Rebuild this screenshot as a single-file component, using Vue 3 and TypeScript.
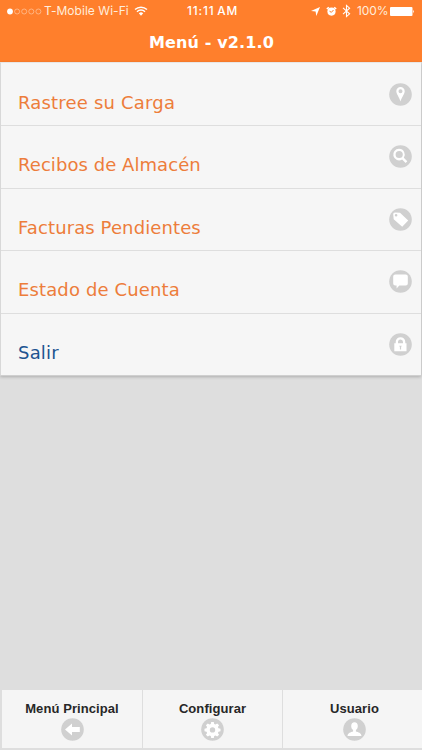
<script setup lang="ts">
type IconName = 'pin' | 'search' | 'tag' | 'comment' | 'lock' | 'back' | 'gear' | 'user'
interface Item { label: string; icon: IconName; exit?: boolean; spacing: number }
interface Tab { label: string; icon: IconName }

const items: Item[] = [
  { label: 'Rastree su Carga', icon: 'pin', spacing: 0.19 },
  { label: 'Recibos de Almacén', icon: 'search', spacing: 0.06 },
  { label: 'Facturas Pendientes', icon: 'tag', spacing: 0.11 },
  { label: 'Estado de Cuenta', icon: 'comment', spacing: 0.13 },
  { label: 'Salir', icon: 'lock', exit: true, spacing: 0.2 },
]
const tabs: Tab[] = [
  { label: 'Menú Principal', icon: 'back' },
  { label: 'Configurar', icon: 'gear' },
  { label: 'Usuario', icon: 'user' },
]
const paths: Record<IconName, string> = {
  pin: 'M11.500 4a4.200 4.200 0 0 0-4.200 4.200c0 2.600 2.800 5.600 4.200 10.300 1.400-4.700 4.200-7.700 4.200-10.300A4.200 4.200 0 0 0 11.500 4zm0 2.200a2 2 0 1 1 0 4 2 2 0 0 1 0-4z',
  search: 'M10.200 3.800a5.800 5.800 0 1 0 2.900 10.700l3.500 3.500 1.700-1.700-3.500-3.500A5.800 5.800 0 0 0 10.200 3.800zm0 2.100a3.600 3.600 0 1 1 0 7.200 3.600 3.600 0 0 1 0-7.200z',
  tag: 'M4.200 6.300l.4-1.400 1.400-.5 5 .3 8.200 7.700-6 6.400-8.500-7.600zm2.900-.4a1.300 1.300 0 1 0 0 2.600 1.300 1.300 0 0 0 0-2.600z',
  comment: 'M6.200 4.600h10.600a2 2 0 0 1 2 2v7a2 2 0 0 1-2 2h-6.500l-2.700 3v-3H6.200a2 2 0 0 1-2-2v-7a2 2 0 0 1 2-2z',
  lock: 'M5.300 10.300h1.400V9a4.800 4.800 0 0 1 9.600 0v1.300h1.200v8H5.300zM9 10.300h5V9a2.500 2.500 0 0 0-5 0zm1.200 2.400 .7 1.200v2.500h1.200V13.900l.7-1.200z',
  back: 'M4 11.500l7-6v3.600h7.800v4.800H11v3.600z',
  gear: 'M10.200 4h2.600l.4 2 1.300.6 1.700-1.200 1.900 1.900-1.200 1.700.6 1.300 2 .4v2.600l-2 .4-.6 1.300 1.200 1.700-1.900 1.900-1.700-1.200-1.300.6-.4 2h-2.600l-.4-2-1.300-.6-1.700 1.200-1.900-1.900 1.200-1.700-.6-1.300-2-.4v-2.600l2-.4.6-1.300-1.200-1.700 1.900-1.900 1.700 1.200 1.300-.6zM11.500 9.200a2.700 2.700 0 1 0 0 5.400 2.700 2.700 0 0 0 0-5.400z',
  user: 'M11.500 4.300c-2.100 0-3.300 1.500-3.300 3.700 0 1.800.7 3.300 1.900 4.100v1.300c-2.300.7-5.400 1.400-5.600 4.500h14c-.2-3.100-3.300-3.800-5.600-4.500v-1.300c1.200-.8 1.900-2.300 1.900-4.100 0-2.200-1.200-3.700-3.300-3.700z',
}
</script>

<template>
  <main class="screen">
    <header class="top">
      <div class="status">
        <div class="carrier">
          <svg class="dots" width="35" height="7" viewBox="0 0 35 7"><circle cx="3" cy="3.500" r="2.900" fill="#fff" /><circle v-for="n in 4" :key="n" :cx="3 + n * 7.1" cy="3.500" r="2.500" fill="none" stroke="#ffc9a2" stroke-width=".7" /></svg>
          <span class="network">T-Mobile Wi-Fi</span>
          <svg class="wifi" width="14" height="10" viewBox="0 0 14 10"><path d="M1 3.500a8.800 8.800 0 0 1 12 0M3 5.700a5.700 5.700 0 0 1 8 0" fill="none" stroke="#fff" stroke-width="1.500" /><path d="M4.800 7.300a3.300 3.300 0 0 1 4.400 0L7 9.700z" fill="#fff" /></svg>
        </div>
        <span class="time">11:11 AM</span>
        <div class="indicators">
          <svg width="9" height="9" viewBox="0 0 9 9"><path d="M9 0 5.300 9 4.600 4.600 0 4z" fill="#fff" /></svg>
          <svg class="alarm" width="11" height="11" viewBox="0 0 11 11"><circle cx="5.500" cy="5.600" r="4.100" fill="#fff" /><path d="M.8 3 2.800 1.200M10.200 3 8.200 1.200" stroke="#fff" stroke-width="1.500" /><path d="M3.500 5.200 5.400 6.300 7.500 4" fill="none" stroke="#ff7f2c" /></svg>
          <svg class="bluetooth" width="9" height="14" viewBox="0 0 9 14"><path d="M1 3.900 7.600 9.800 4.500 12.600V1.400l3.100 2.800L1 10.100" fill="none" stroke="#fff" stroke-width="1.100" /></svg>
          <span class="percent">100%</span>
          <svg class="battery" width="25" height="9" viewBox="0 0 25 9"><rect width="22.500" height="9" rx="1" fill="#fff" /><path d="M23.200 2.800q1.800 1.700 0 3.400z" fill="#fff" /></svg>
        </div>
      </div>
      <h1>Menú - v2.1.0</h1>
    </header>
    <nav class="menu">
      <a v-for="item in items" :key="item.label" class="row" :class="{ exit: item.exit }">
        <span class="label" :style="{ letterSpacing: item.spacing + 'px' }">{{ item.label }}</span>
        <svg class="icon" viewBox="0 0 23 23"><circle cx="11.500" cy="11.500" r="11.300" fill="#d0d0d0" /><path :d="paths[item.icon]" fill="#fff" fill-rule="evenodd" /></svg>
      </a>
    </nav>
    <footer class="tabs">
      <a v-for="tab in tabs" :key="tab.label" class="tab">
        <span>{{ tab.label }}</span>
        <svg class="icon" viewBox="0 0 23 23"><circle cx="11.500" cy="11.500" r="11.300" fill="#d0d0d0" /><path :d="paths[tab.icon]" fill="#fff" fill-rule="evenodd" /></svg>
      </a>
    </footer>
  </main>
</template>

<style>
body { margin: 0; }
</style>

<style scoped>
* { box-sizing: border-box; }
.screen { width: 422px; height: 750px; display: flex; flex-direction: column; background: #dedede; overflow: hidden; }
.top { height: 62px; background: #ff7f2c; color: #fff; flex: none; }
.status { height: 22px; display: grid; grid-template-columns: 187px 1fr 112px; align-items: center; font: 12px/22px Inter, sans-serif; }
.carrier, .indicators { display: flex; align-items: center; }
.carrier { padding-left: 7px; }
.network { margin-left: 2px; width: 85px; white-space: nowrap; letter-spacing: .04px; color: #ffeddc; }
.wifi { margin-left: 5px; }
.time { font-size: 11.8px; font-weight: 500; letter-spacing: .85px; word-spacing: -1.2px; white-space: nowrap; }
.indicators { padding-left: 1px; }
.alarm { margin-left: 6px; }
.bluetooth { margin-left: 5px; }
.percent { width: 31px; margin-left: 6px; letter-spacing: -.1px; color: #ffeddc; }
.battery { margin-left: 2px; flex: none; }
h1 { margin: 0; padding: 1px 0 0 1px; font: bold 16px/40px "DejaVu Sans", sans-serif; letter-spacing: .14px; text-align: center; }
.menu { flex: none; height: 314px; margin-right: 1px; border-left: 1px solid #d8d8d8; border-top: 1px solid #e7e7e7; border-bottom: 1px solid #cfcfcf; box-shadow: 0 1px 3px rgba(0, 0, 0, .22); display: grid; grid-template-rows: repeat(5, 1fr); background: #f6f6f6; }
.row { display: flex; justify-content: space-between; padding: 19px 9px 0 17px; color: #ed7d3b; font: 18px/42px "DejaVu Sans", sans-serif; }
.row + .row { border-top: 1px solid #dedede; padding-top: 18px; }
.row .icon { margin-top: 1px; }
.exit { color: #205390; }
.icon { width: 23px; height: 23px; flex: none; display: block; }
.tabs { margin: auto 0 2px 2px; height: 58px; display: grid; grid-template-columns: 140px 140px 144px; background: #f5f5f5; }
.tab { display: flex; flex-direction: column; align-items: center; padding-top: 11px; font: bold 13px/16px "Liberation Sans", sans-serif; letter-spacing: .08px; color: #272727; }
.tab + .tab { border-left: 1px solid #dedede; }
.tab .icon { margin-top: 1px; }
</style>
